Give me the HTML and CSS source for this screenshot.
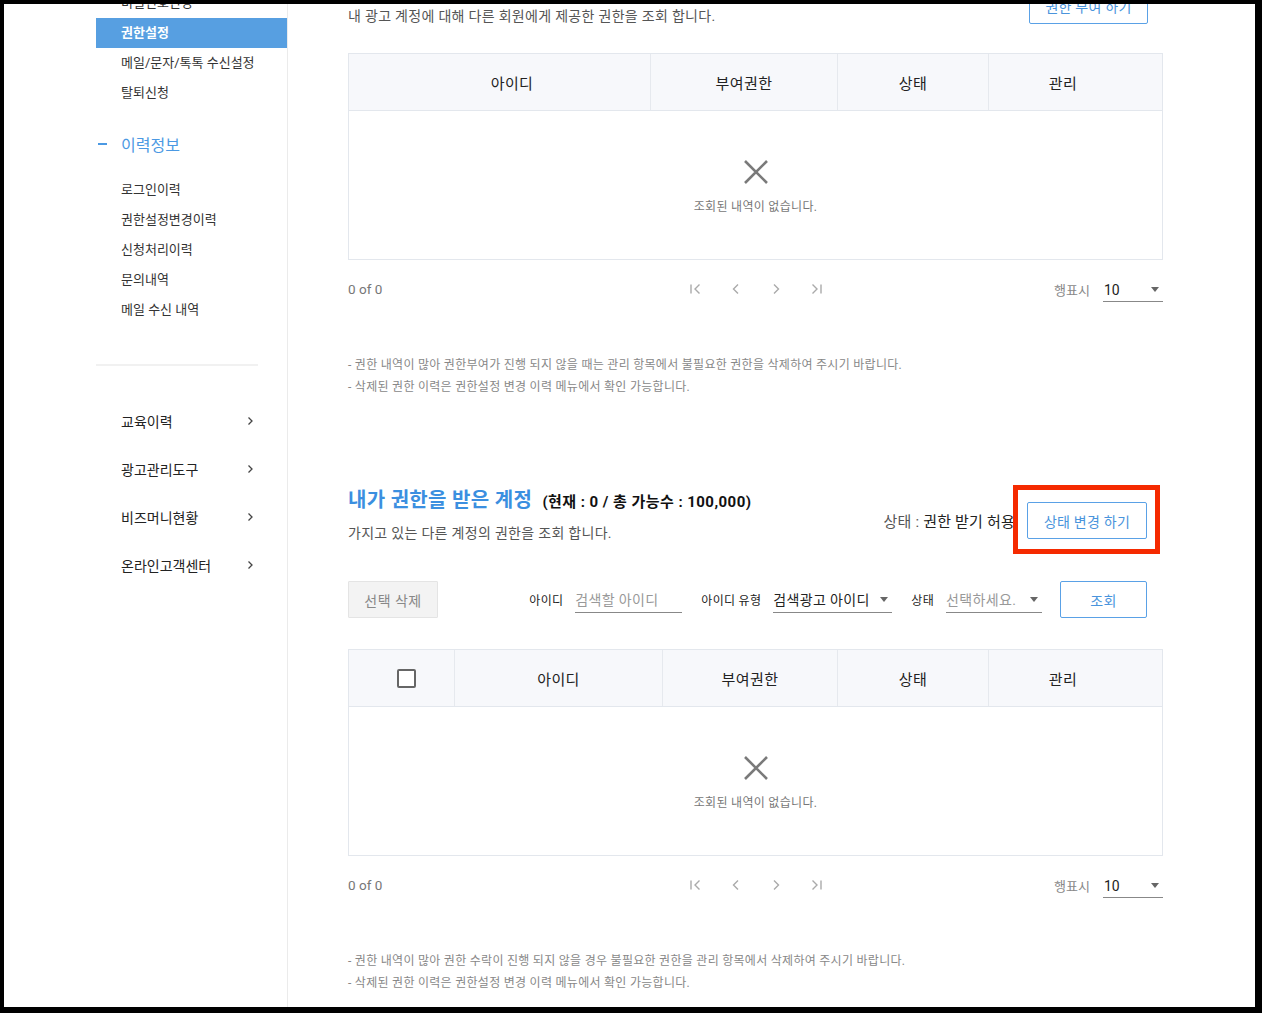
FILE: index.html
```html
<!DOCTYPE html>
<html lang="ko">
<head>
<meta charset="utf-8">
<title>권한설정</title>
<link rel="stylesheet" href="styles.css">
</head>
<body>
<div class="frame">
  <aside class="sidebar">
    <ul class="nav-list top-list">
      <li class="nav-item">비밀번호변경</li>
      <li class="nav-item active">권한설정</li>
      <li class="nav-item">메일/문자/톡톡 수신설정</li>
      <li class="nav-item">탈퇴신청</li>
    </ul>
    <div class="nav-group-title"><span class="minus"></span>이력정보</div>
    <ul class="nav-list sub-list">
      <li class="nav-item">로그인이력</li>
      <li class="nav-item">권한설정변경이력</li>
      <li class="nav-item">신청처리이력</li>
      <li class="nav-item">문의내역</li>
      <li class="nav-item">메일 수신 내역</li>
    </ul>
    <div class="nav-divider"></div>
    <ul class="menu-list">
      <li class="menu-item"><span>교육이력</span><svg class="chev" width="7" height="10" viewBox="0 0 7 10"><polyline points="1.5,1.5 5,5 1.5,8.5" fill="none" stroke="#444" stroke-width="1.3"/></svg></li>
      <li class="menu-item"><span>광고관리도구</span><svg class="chev" width="7" height="10" viewBox="0 0 7 10"><polyline points="1.5,1.5 5,5 1.5,8.5" fill="none" stroke="#444" stroke-width="1.3"/></svg></li>
      <li class="menu-item"><span>비즈머니현황</span><svg class="chev" width="7" height="10" viewBox="0 0 7 10"><polyline points="1.5,1.5 5,5 1.5,8.5" fill="none" stroke="#444" stroke-width="1.3"/></svg></li>
      <li class="menu-item"><span>온라인고객센터</span><svg class="chev" width="7" height="10" viewBox="0 0 7 10"><polyline points="1.5,1.5 5,5 1.5,8.5" fill="none" stroke="#444" stroke-width="1.3"/></svg></li>
    </ul>
  </aside>

  <main class="content">
    <section class="section first">
      <div class="sec-head">
        <div class="sec-left">
          <p class="sec-desc">내 광고 계정에 대해 다른 회원에게 제공한 권한을 조회 합니다.</p>
        </div>
        <div class="sec-right">
          <button class="btn-line">권한 부여 하기</button>
        </div>
      </div>

      <div class="table t1">
        <div class="thead">
          <div class="th c-id1">아이디</div>
          <div class="th c-auth1">부여권한</div>
          <div class="th c-state">상태</div>
          <div class="th c-manage">관리</div>
        </div>
        <div class="tbody-empty">
          <svg class="x-icon" width="26" height="26" viewBox="0 0 26 26"><path d="M2 2 L24 24 M24 2 L2 24" stroke="#7a7a7a" stroke-width="2.6" fill="none"/></svg>
          <p class="empty-text">조회된 내역이 없습니다.</p>
        </div>
      </div>

      <div class="pager">
        <span class="count">0 of 0</span>
        <div class="pager-nav">
          <span class="pg"><svg width="14" height="14" viewBox="0 0 14 14"><path d="M2 2.5 V11.5 M10.5 2.5 L6 7 L10.5 11.5" stroke="#aaa" stroke-width="1.4" fill="none"/></svg></span>
          <span class="pg"><svg width="14" height="14" viewBox="0 0 14 14"><path d="M9 2.5 L4.5 7 L9 11.5" stroke="#aaa" stroke-width="1.4" fill="none"/></svg></span>
          <span class="pg"><svg width="14" height="14" viewBox="0 0 14 14"><path d="M5 2.5 L9.5 7 L5 11.5" stroke="#aaa" stroke-width="1.4" fill="none"/></svg></span>
          <span class="pg"><svg width="14" height="14" viewBox="0 0 14 14"><path d="M3.5 2.5 L8 7 L3.5 11.5 M12 2.5 V11.5" stroke="#aaa" stroke-width="1.4" fill="none"/></svg></span>
        </div>
        <div class="rows">
          <span class="rows-label">행표시</span>
          <div class="select rows-select"><span class="val">10</span><span class="tri"></span></div>
        </div>
      </div>

      <ul class="notes">
        <li>- 권한 내역이 많아 권한부여가 진행 되지 않을 때는 관리 항목에서 불필요한 권한을 삭제하여 주시기 바랍니다.</li>
        <li>- 삭제된 권한 이력은 권한설정 변경 이력 메뉴에서 확인 가능합니다.</li>
      </ul>
    </section>

    <section class="section second">
      <div class="sec-head">
        <div class="sec-left">
          <h2 class="sec-title">내가 권한을 받은 계정 <span class="sec-count">(현재 : 0 / 총 가능수 : 100,000)</span></h2>
          <p class="sec-desc">가지고 있는 다른 계정의 권한을 조회 합니다.</p>
        </div>
        <div class="sec-right">
          <span class="status"><span class="status-label">상태 : </span>권한 받기 허용</span>
          <span class="highlight"><button class="btn-line">상태 변경 하기</button></span>
        </div>
      </div>

      <div class="filter">
        <button class="btn-gray">선택 삭제</button>
        <div class="filter-fields">
          <label class="f-label">아이디</label>
          <div class="f-input w-id"><span class="ph">검색할 아이디</span></div>
          <label class="f-label">아이디 유형</label>
          <div class="select f-select w-type"><span class="val">검색광고 아이디</span><span class="tri"></span></div>
          <label class="f-label">상태</label>
          <div class="select f-select w-state"><span class="ph">선택하세요.</span><span class="tri"></span></div>
          <button class="btn-line btn-search">조회</button>
        </div>
      </div>

      <div class="table t2">
        <div class="thead">
          <div class="th c-check"><span class="checkbox"></span></div>
          <div class="th c-id2">아이디</div>
          <div class="th c-auth2">부여권한</div>
          <div class="th c-state">상태</div>
          <div class="th c-manage">관리</div>
        </div>
        <div class="tbody-empty">
          <svg class="x-icon" width="26" height="26" viewBox="0 0 26 26"><path d="M2 2 L24 24 M24 2 L2 24" stroke="#7a7a7a" stroke-width="2.6" fill="none"/></svg>
          <p class="empty-text">조회된 내역이 없습니다.</p>
        </div>
      </div>

      <div class="pager">
        <span class="count">0 of 0</span>
        <div class="pager-nav">
          <span class="pg"><svg width="14" height="14" viewBox="0 0 14 14"><path d="M2 2.5 V11.5 M10.5 2.5 L6 7 L10.5 11.5" stroke="#aaa" stroke-width="1.4" fill="none"/></svg></span>
          <span class="pg"><svg width="14" height="14" viewBox="0 0 14 14"><path d="M9 2.5 L4.5 7 L9 11.5" stroke="#aaa" stroke-width="1.4" fill="none"/></svg></span>
          <span class="pg"><svg width="14" height="14" viewBox="0 0 14 14"><path d="M5 2.5 L9.5 7 L5 11.5" stroke="#aaa" stroke-width="1.4" fill="none"/></svg></span>
          <span class="pg"><svg width="14" height="14" viewBox="0 0 14 14"><path d="M3.5 2.5 L8 7 L3.5 11.5 M12 2.5 V11.5" stroke="#aaa" stroke-width="1.4" fill="none"/></svg></span>
        </div>
        <div class="rows">
          <span class="rows-label">행표시</span>
          <div class="select rows-select"><span class="val">10</span><span class="tri"></span></div>
        </div>
      </div>

      <ul class="notes">
        <li>- 권한 내역이 많아 권한 수락이 진행 되지 않을 경우 불필요한 권한을 관리 항목에서 삭제하여 주시기 바랍니다.</li>
        <li>- 삭제된 권한 이력은 권한설정 변경 이력 메뉴에서 확인 가능합니다.</li>
      </ul>
    </section>
  </main>
</div>
</body>
</html>
```

FILE: styles.css
```css
* { box-sizing: border-box; }
html, body { margin: 0; padding: 0; }
body {
  background: #000;
  padding: 4px 7px 6px 4px;
  font-family: Roboto, "Noto Sans CJK KR", sans-serif;
  color: #222;
}
ul { list-style: none; margin: 0; padding: 0; }
p, h2 { margin: 0; }
button { font-family: inherit; cursor: pointer; }

.frame {
  width: 1251px;
  height: 1003px;
  background: #fff;
  overflow: hidden;
  display: flex;
}

/* ---------- sidebar ---------- */
.sidebar {
  width: 284px;
  flex: none;
  border-right: 1px solid #ebebeb;
  padding-left: 92px;
}
.top-list { margin-top: -16px; }
.nav-item {
  height: 30px;
  line-height: 30px;
  padding-left: 25px;
  font-size: 13px;
  color: #333;
  white-space: nowrap;
}
.nav-item.active {
  background: #579fe1;
  color: #fff;
  font-weight: 700;
}
.nav-group-title {
  margin-top: 21px;
  height: 30px;
  display: flex;
  align-items: center;
  font-size: 16px;
  color: #4b99e3;
}
.minus {
  width: 9px;
  height: 1.5px;
  background: #4b99e3;
  margin-left: 2px;
  margin-right: 14px;
}
.sub-list { margin-top: 16px; }
.nav-divider {
  margin-top: 39px;
  width: 162px;
  border-top: 2px solid #f1f1f1;
}
.menu-list { margin-top: 31px; width: 162px; }
.menu-item {
  height: 48px;
  display: flex;
  align-items: center;
  justify-content: space-between;
  padding-left: 25px;
  padding-right: 4px;
  font-size: 14px;
  color: #222;
}
.chev { flex: none; }

/* ---------- content ---------- */
.content {
  flex: none;
  width: 875px;
  padding-left: 60px;
}
.section { width: 815px; }
.section.first { margin-top: -17px; }
.section.second { margin-top: 87px; }

.sec-head {
  display: flex;
  justify-content: space-between;
  align-items: flex-end;
}
.sec-right {
  display: flex;
  align-items: center;
  padding-right: 15px;
  margin-bottom: 2px;
}
.second .sec-right { padding-right: 16px; margin-bottom: 4px; }
.sec-desc {
  font-size: 14px;
  line-height: 20px;
  letter-spacing: 0.3px;
  color: #555;
}
.sec-title {
  font-size: 20px;
  line-height: 30px;
  font-weight: 700;
  letter-spacing: 0.3px;
  color: #3b8fe0;
}
.sec-count {
  font-size: 15px;
  color: #111;
  letter-spacing: 0.45px;
  margin-left: 5px;
}
.second .sec-desc { margin-top: 6px; }

.btn-line {
  height: 37px;
  padding: 0;
  background: #fff;
  border: 1px solid #5aa1e6;
  border-radius: 2px;
  color: #4a94dc;
  font-size: 14px;
  letter-spacing: 0.25px;
}
.first .btn-line { width: 119px; }
.status {
  font-size: 15px;
  letter-spacing: 0.2px;
  color: #222;
  margin-right: 12px;
}
.status-label { color: #555; }
.highlight { position: relative; display: inline-flex; }
.highlight .btn-line { width: 120px; }
.highlight::after {
  content: "";
  position: absolute;
  top: -17px;
  bottom: -15px;
  left: -14px;
  right: -13px;
  border: 5px solid #f52a00;
  pointer-events: none;
}

/* ---------- table ---------- */
.table {
  border: 1px solid #e3e7ed;
}
.first .table { margin-top: 27px; }
.second .table { margin-top: 31px; }
.thead {
  display: flex;
  height: 57px;
  background: #f7f8fb;
  border-bottom: 1px solid #e3e7ed;
}
.th {
  display: flex;
  align-items: center;
  justify-content: center;
  font-size: 15px;
  letter-spacing: 0.4px;
  color: #222;
  border-left: 1px solid #e6e9ee;
}
.th:first-child { border-left: none; }
.c-id1 { width: 301px; padding-left: 25px; }
.c-auth1 { width: 187px; }
.c-state { width: 151px; }
.c-manage { flex: 1; padding-right: 25px; }
.c-check { width: 105px; justify-content: flex-start; padding-left: 48px; }
.c-id2 { width: 208px; }
.c-auth2 { width: 175px; }
.checkbox {
  width: 19px;
  height: 19px;
  border: 2px solid #666;
  border-radius: 2px;
  background: #fff;
}
.tbody-empty {
  height: 148px;
  display: flex;
  flex-direction: column;
  align-items: center;
  padding-top: 48px;
}
.x-icon { display: block; }
.empty-text {
  margin-top: 13px;
  font-size: 12px;
  line-height: 18px;
  letter-spacing: 0.3px;
  color: #777;
}

/* ---------- pager ---------- */
.pager {
  margin-top: 16px;
  height: 26px;
  display: grid;
  grid-template-columns: 1fr auto 1fr;
  align-items: center;
}
.count { font-size: 13.5px; color: #777; }
.pager-nav { display: flex; }
.pg {
  width: 40px;
  display: flex;
  justify-content: center;
}
.pg svg { display: block; }
.rows {
  display: flex;
  align-items: center;
  justify-content: flex-end;
}
.rows-label {
  font-size: 13px;
  color: #888;
  margin-right: 13px;
}
.select {
  display: flex;
  align-items: center;
  justify-content: space-between;
  border-bottom: 1px solid #888;
}
.rows-select {
  width: 60px;
  height: 24px;
  padding: 0 4px 0 1px;
  font-size: 14px;
  color: #222;
  margin-top: 2px;
}
.tri {
  width: 0;
  height: 0;
  border-left: 4.5px solid transparent;
  border-right: 4.5px solid transparent;
  border-top: 5px solid #666;
}

/* ---------- notes ---------- */
.notes { margin-top: 52px; }
.notes li {
  font-size: 12px;
  line-height: 22px;
  letter-spacing: 0.28px;
  color: #888;
}

/* ---------- filter ---------- */
.filter {
  margin-top: 38px;
  display: flex;
  justify-content: space-between;
  align-items: center;
  padding-right: 16px;
}
.btn-gray {
  width: 90px;
  height: 37px;
  background: #f3f3f3;
  border: 1px solid #e4e4e4;
  border-radius: 1px;
  color: #888;
  font-size: 14px;
  letter-spacing: 0.5px;
}
.filter-fields {
  display: flex;
  align-items: center;
}
.f-label {
  font-size: 12px;
  color: #222;
  margin-right: 12px;
  letter-spacing: 0.3px;
}
.f-input, .f-select {
  height: 26px;
  display: flex;
  align-items: center;
  border-bottom: 1px solid #888;
  font-size: 14px;
  letter-spacing: 0.35px;
  margin-right: 19px;
}
.f-select { padding-right: 4px; }
.ph { color: #999; }
.val { color: #222; }
.w-id { width: 107px; }
.w-type { width: 119px; }
.w-state { width: 96px; margin-right: 18px; }
.btn-search { width: 87px; }
```
